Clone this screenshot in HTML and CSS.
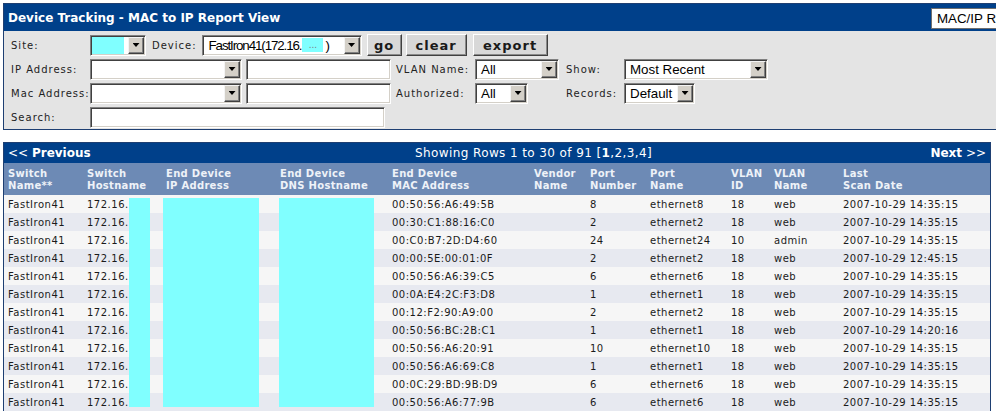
FILE: index.html
```html
<!DOCTYPE html>
<html>
<head>
<meta charset="utf-8">
<title>Device Tracking - MAC to IP Report View</title>
<link rel="stylesheet" href="styles.css">
</head>
<body>
<div class="panel">
  <div class="titlebar">
    <div class="title">Device Tracking - MAC to IP Report View</div>
    <div class="navsel">MAC/IP Report View</div>
  </div>
  <div class="form">
    <div class="lbl">Site:</div>
    <div class="row1">
      <div class="combo w-site"><span class="val"><span class="mask-site"></span></span><span class="btn"><span class="arrow"></span></span></div>
      <div class="lbl lbl-device">Device:</div>
      <div class="combo w-device"><span class="val tight">FastIron41(172.16.<span class="mask-dev">...</span>)</span><span class="btn"><span class="arrow"></span></span></div>
      <div class="button b-go">go</div>
      <div class="button b-clear">clear</div>
      <div class="button b-export">export</div>
    </div>

    <div class="lbl">IP Address:</div>
    <div class="pair">
      <div class="combo w-ip"><span class="val"></span><span class="btn"><span class="arrow"></span></span></div>
      <div class="input w-in"></div>
    </div>
    <div class="lbl">VLAN Name:</div>
    <div class="combo w-vlan"><span class="val">All</span><span class="btn"><span class="arrow"></span></span></div>
    <div class="lbl">Show:</div>
    <div class="combo w-show"><span class="val">Most Recent</span><span class="btn"><span class="arrow"></span></span></div>

    <div class="lbl">Mac Address:</div>
    <div class="pair">
      <div class="combo w-ip"><span class="val"></span><span class="btn"><span class="arrow"></span></span></div>
      <div class="input w-in"></div>
    </div>
    <div class="lbl">Authorized:</div>
    <div class="combo w-auth"><span class="val">All</span><span class="btn"><span class="arrow"></span></span></div>
    <div class="lbl">Records:</div>
    <div class="combo w-rec"><span class="val">Default</span><span class="btn"><span class="arrow"></span></span></div>

    <div class="lbl">Search:</div>
    <div class="input w-search"></div>
  </div>
</div>

<div class="report">
  <div class="pager">
    <div class="prev">&lt;&lt; <b>Previous</b></div>
    <div class="showing">Showing Rows 1 to 30 of 91 [<b>1</b>,2,3,4]</div>
    <div class="next"><b>Next</b> &gt;&gt;</div>
  </div>
  <table class="data">
    <colgroup>
      <col class="c1"><col class="c2"><col class="c3"><col class="c4"><col class="c5"><col class="c6"><col class="c7"><col class="c8"><col class="c9"><col class="c10"><col class="c11">
    </colgroup>
    <thead>
      <tr>
        <th>Switch<br>Name**</th>
        <th>Switch<br>Hostname</th>
        <th>End Device<br>IP Address</th>
        <th>End Device<br>DNS Hostname</th>
        <th>End Device<br>MAC Address</th>
        <th>Vendor<br>Name</th>
        <th>Port<br>Number</th>
        <th>Port<br>Name</th>
        <th>VLAN<br>ID</th>
        <th>VLAN<br>Name</th>
        <th>Last<br>Scan Date</th>
      </tr>
    </thead>
    <tbody>
      <tr><td>FastIron41</td><td>172.16.</td><td></td><td></td><td>00:50:56:A6:49:5B</td><td></td><td>8</td><td>ethernet8</td><td>18</td><td>web</td><td>2007-10-29 14:35:15</td></tr>
      <tr><td>FastIron41</td><td>172.16.</td><td></td><td></td><td>00:30:C1:88:16:C0</td><td></td><td>2</td><td>ethernet2</td><td>18</td><td>web</td><td>2007-10-29 14:35:15</td></tr>
      <tr><td>FastIron41</td><td>172.16.</td><td></td><td></td><td>00:C0:B7:2D:D4:60</td><td></td><td>24</td><td>ethernet24</td><td>10</td><td>admin</td><td>2007-10-29 14:35:15</td></tr>
      <tr><td>FastIron41</td><td>172.16.</td><td></td><td></td><td>00:00:5E:00:01:0F</td><td></td><td>2</td><td>ethernet2</td><td>18</td><td>web</td><td>2007-10-29 12:45:15</td></tr>
      <tr><td>FastIron41</td><td>172.16.</td><td></td><td></td><td>00:50:56:A6:39:C5</td><td></td><td>6</td><td>ethernet6</td><td>18</td><td>web</td><td>2007-10-29 14:35:15</td></tr>
      <tr><td>FastIron41</td><td>172.16.</td><td></td><td></td><td>00:0A:E4:2C:F3:D8</td><td></td><td>1</td><td>ethernet1</td><td>18</td><td>web</td><td>2007-10-29 14:35:15</td></tr>
      <tr><td>FastIron41</td><td>172.16.</td><td></td><td></td><td>00:12:F2:90:A9:00</td><td></td><td>2</td><td>ethernet2</td><td>18</td><td>web</td><td>2007-10-29 14:35:15</td></tr>
      <tr><td>FastIron41</td><td>172.16.</td><td></td><td></td><td>00:50:56:BC:2B:C1</td><td></td><td>1</td><td>ethernet1</td><td>18</td><td>web</td><td>2007-10-29 14:20:16</td></tr>
      <tr><td>FastIron41</td><td>172.16.</td><td></td><td></td><td>00:50:56:A6:20:91</td><td></td><td>10</td><td>ethernet10</td><td>18</td><td>web</td><td>2007-10-29 14:35:15</td></tr>
      <tr><td>FastIron41</td><td>172.16.</td><td></td><td></td><td>00:50:56:A6:69:C8</td><td></td><td>1</td><td>ethernet1</td><td>18</td><td>web</td><td>2007-10-29 14:35:15</td></tr>
      <tr><td>FastIron41</td><td>172.16.</td><td></td><td></td><td>00:0C:29:BD:9B:D9</td><td></td><td>6</td><td>ethernet6</td><td>18</td><td>web</td><td>2007-10-29 14:35:15</td></tr>
      <tr><td>FastIron41</td><td>172.16.</td><td></td><td></td><td>00:50:56:A6:77:9B</td><td></td><td>6</td><td>ethernet6</td><td>18</td><td>web</td><td>2007-10-29 14:35:15</td></tr>
    </tbody>
  </table>
  <div class="mask mask-host"></div>
  <div class="mask mask-ip"></div>
  <div class="mask mask-dns"></div>
</div>
</body>
</html>
```

FILE: styles.css
```css
html, body {
  margin: 0;
  overflow: hidden;
  background: #ffffff;
}
body {
  padding: 3px 0 0 3px;
  font-family: "DejaVu Sans", Verdana, sans-serif;
  color: #1a1a1a;
}

/* ---------- top panel ---------- */
.panel {
  width: 1100px;
  border: 1px solid #1e3f72;
  background: #e4e4e4;
}
.titlebar {
  height: 27px;
  background: #00408a;
  display: flex;
  align-items: center;
}
.title {
  box-sizing: border-box;
  width: 927px;
  padding-left: 4px;
  color: #ffffff;
  font-weight: bold;
  font-size: 12px;
}
.navsel {
  box-sizing: border-box;
  width: 150px;
  height: 21px;
  margin-top: 2px;
  background: #ffffff;
  border: 1px solid #6f6f6f;
  padding-left: 5px;
  font-family: "Liberation Sans", Arial, sans-serif;
  font-size: 13.33px;
  line-height: 19px;
  color: #000;
  white-space: nowrap;
  overflow: hidden;
}

.form {
  display: grid;
  grid-template-columns: 79px 306px 79px 91px 58px 1fr;
  grid-auto-rows: 24px;
  align-items: center;
  padding: 2px 0 0 7px;
}
.lbl {
  font-size: 10px;
  letter-spacing: 1px;
  color: #222;
  white-space: nowrap;
}
.row1 {
  grid-column: 2 / -1;
  display: flex;
  align-items: center;
}
.lbl-device { margin-left: 6px; }
.pair {
  display: flex;
  align-items: center;
  gap: 4px;
}

/* combo (select) */
.combo {
  box-sizing: border-box;
  height: 21px;
  display: flex;
  padding: 1px;
  background: #ffffff;
  border: 1px solid;
  border-color: #808080 #ffffff #ffffff #808080;
  box-shadow: inset 1px 1px 0 #404040, inset -1px -1px 0 #d4d0c8;
}
.combo .val {
  flex: 1;
  min-width: 0;
  display: flex;
  align-items: center;
  padding-left: 4px;
  font-family: "Liberation Sans", Arial, sans-serif;
  font-size: 13.33px;
  color: #000;
  white-space: nowrap;
  overflow: hidden;
}
.combo .val.tight { letter-spacing: -1.1px; padding-left: 5px; }
.combo .btn {
  box-sizing: border-box;
  width: 16px;
  flex: none;
  background: #d4d0c8;
  border: 1px solid;
  border-color: #f4f4f4 #404040 #404040 #f4f4f4;
  box-shadow: inset -1px -1px 0 #808080;
  display: flex;
  align-items: center;
  justify-content: center;
}
.arrow {
  width: 7px;
  height: 4px;
  background: #000;
  clip-path: polygon(0 0, 100% 0, 50% 100%);
}
.w-site { width: 56px; }
.w-device { width: 160px; margin-left: 5px; }
.w-ip { width: 152px; }
.w-vlan { width: 84px; }
.w-show { width: 144px; }
.w-auth { width: 53px; }
.w-rec { width: 71px; }

.mask-site {
  display: block;
  width: 32px;
  height: 100%;
  margin-left: -4px;
  background: #80ffff;
}
.mask-dev {
  display: inline-block;
  width: 21px;
  height: 14px;
  line-height: 14px;
  background: #80ffff;
  color: #7f7f7f;
  font-size: 10px;
  letter-spacing: 0;
  text-align: center;
  vertical-align: -2px;
  margin: 0 2px 0 1px;
}

/* text input */
.input {
  box-sizing: border-box;
  height: 21px;
  background: #ffffff;
  border: 1px solid;
  border-color: #808080 #ffffff #ffffff #808080;
  box-shadow: inset 1px 1px 0 #404040, inset -1px -1px 0 #d4d0c8;
}
.w-in { width: 145px; }
.w-search { width: 295px; }

/* buttons */
.button {
  box-sizing: border-box;
  height: 22px;
  display: flex;
  align-items: center;
  justify-content: center;
  background: #d8d8d8;
  border: 1px solid;
  border-color: #ffffff #404040 #404040 #ffffff;
  box-shadow: inset -1px -1px 0 #8a8a8a;
  font-weight: bold;
  font-size: 13px;
  letter-spacing: 1px;
  color: #1a1a1a;
}
.b-go { width: 35px; margin-left: 5px; }
.b-clear { width: 61px; margin-left: 4px; }
.b-export { width: 75px; margin-left: 6px; }

/* ---------- report table ---------- */
.report {
  position: relative;
  box-sizing: border-box;
  width: 988px;
  margin-top: 12px;
  border: 1px solid #1e3f72;
  border-bottom: 0;
}
.pager {
  height: 20px;
  display: grid;
  grid-template-columns: 407px 1fr auto;
  align-items: center;
  padding: 0 4px;
  background: #00408a;
  color: #ffffff;
  font-size: 12px;
}
.showing { letter-spacing: 0.4px; }
.prev b, .next b { font-weight: bold; }

.data {
  width: 100%;
  border-collapse: collapse;
  table-layout: fixed;
}
.c1 { width: 79px; }
.c2 { width: 79px; }
.c3 { width: 114px; }
.c4 { width: 112px; }
.c5 { width: 142px; }
.c6 { width: 56px; }
.c7 { width: 60px; }
.c8 { width: 81px; }
.c9 { width: 43px; }
.c10 { width: 69px; }
.c11 { width: 151px; }

.data th {
  background: #6d8ab5;
  color: #eef2f8;
  font-weight: bold;
  font-size: 10px;
  line-height: 12px;
  letter-spacing: 0.3px;
  text-align: left;
  vertical-align: top;
  padding: 5px 4px 3px;
  white-space: nowrap;
  overflow: hidden;
}
.data td {
  height: 18px;
  padding: 0 4px;
  font-size: 10px;
  letter-spacing: 0.5px;
  white-space: nowrap;
  overflow: hidden;
  color: #1a1a1a;
}
.data tbody tr:nth-child(odd) td { background: #f6f6f6; }
.data tbody tr:nth-child(even) td { background: #e7e9f0; }

.mask {
  position: absolute;
  top: 55px;
  height: 209px;
  background: #80ffff;
}
.mask-host { left: 125px; width: 21px; }
.mask-ip { left: 159px; width: 96px; }
.mask-dns { left: 275px; width: 95px; }
```
